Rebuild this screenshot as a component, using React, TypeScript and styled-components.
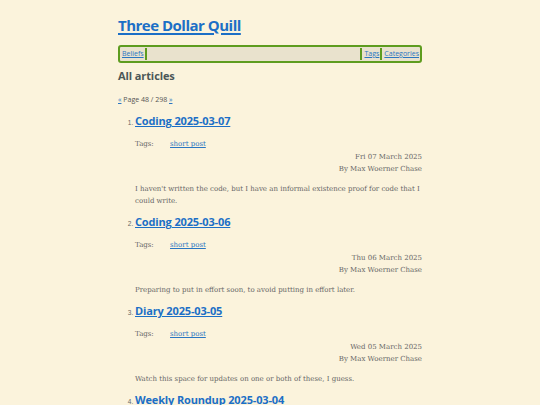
import React from "react";
import styled, { createGlobalStyle } from "styled-components";

const Global = createGlobalStyle`
  html, body { margin: 0; padding: 0; background: #fbf3dc; }
  body { font-family: "DejaVu Serif", serif; color: #555; }
`;

const Page = styled.div`
  width: 304px;
  margin: 0 auto;
  padding-top: 13px;
`;

const SiteTitle = styled.h1`
  margin: 0 0 8px 0;
  font-family: "Open Sans", "Noto Sans", sans-serif;
  font-size: 15px;
  letter-spacing: -0.5px;
  font-weight: 700;
  line-height: 24px;
  a { color: #1c6fc6; text-decoration: underline; text-decoration-thickness: 2px; text-underline-offset: 2px; }
`;

const Nav = styled.nav`
  display: flex;
  align-items: stretch;
  height: 12px;
  border: 2px solid #5e9c1f;
  border-radius: 3px;
  background: #e9e2cd;
  padding: 1px 0;
  font-family: "Open Sans", "Noto Sans", sans-serif;
  font-size: 7px;
  line-height: 12px;
`;

const NavItem = styled.a<{ $left?: boolean }>`
  color: #2a76c2;
  text-decoration: underline;
  padding: 0 1px 0 2px;
  ${(p) => (p.$left ? "border-right: 2px solid #5e9c1f;" : "border-left: 2px solid #5e9c1f;")}
`;

const Spacer = styled.div`
  flex: 1;
`;

const Heading = styled.h2`
  margin: 5px 0 0 0;
  font-family: "Open Sans", "Noto Sans", sans-serif;
  font-size: 11px;
  letter-spacing: -0.1px;
  font-weight: 700;
  color: #4b5757;
  line-height: 16px;
`;

const Pager = styled.p`
  margin: 10px 0 0 0;
  font-family: "Open Sans", "Noto Sans", sans-serif;
  font-size: 7px;
  line-height: 12px;
  color: #555;
  a { color: #2a76c2; }
`;

const List = styled.ol`
  margin: 6px 0 0 0;
  padding-left: 17px;
  font-family: "Liberation Sans", sans-serif;
  font-size: 6.5px;
  color: #666;
`;

const Item = styled.li`
  margin-bottom: 6px;
`;

const ItemTitle = styled.h3`
  margin: 0;
  display: inline;
  font-family: "Open Sans", "Noto Sans", sans-serif;
  font-size: 11px;
  letter-spacing: -0.15px;
  font-weight: 700;
  line-height: 18px;
  a { color: #1c6fc6; text-decoration: underline; text-underline-offset: 1px; }
`;

const Meta = styled.div`
  margin-top: 8px;
  display: flex;
  font-family: "DejaVu Serif", serif;
  font-size: 7px;
  line-height: 12px;
  color: #666;
`;

const TagLabel = styled.span`
  width: 35px;
`;

const TagLink = styled.a`
  color: #2a76c2;
  text-decoration: underline;
`;

const Byline = styled.div<{ $first?: boolean }>`
  margin-top: ${(p) => (p.$first ? "1px" : "0")};
  text-align: right;
  font-family: "DejaVu Serif", serif;
  font-size: 7px;
  line-height: 12px;
  color: #666;
`;

const Summary = styled.p`
  margin: 8px 0 0 0;
  font-family: "DejaVu Serif", serif;
  font-size: 7px;
  line-height: 12px;
  color: #666;
`;

const posts = [
  { title: "Coding 2025-03-07", date: "Fri 07 March 2025", text: "I haven't written the code, but I have an informal existence proof for code that I could write." },
  { title: "Coding 2025-03-06", date: "Thu 06 March 2025", text: "Preparing to put in effort soon, to avoid putting in effort later." },
  { title: "Diary 2025-03-05", date: "Wed 05 March 2025", text: "Watch this space for updates on one or both of these, I guess." },
  { title: "Weekly Roundup 2025-03-04", date: "Tue 04 March 2025", text: "Some stuff." },
];

export default function App() {
  return (
    <>
      <Global />
      <Page>
        <SiteTitle><a href="#">Three Dollar Quill</a></SiteTitle>
        <Nav>
          <NavItem href="#" $left>Beliefs</NavItem>
          <Spacer />
          <NavItem href="#">Tags</NavItem>
          <NavItem href="#">Categories</NavItem>
        </Nav>
        <Heading>All articles</Heading>
        <Pager><a href="#">«</a> Page 48 / 298 <a href="#">»</a></Pager>
        <List>
          {posts.map((p) => (
            <Item key={p.title}>
              <ItemTitle><a href="#">{p.title}</a></ItemTitle>
              <Meta>
                <TagLabel>Tags:</TagLabel>
                <TagLink href="#">short post</TagLink>
              </Meta>
              <Byline $first>{p.date}</Byline>
              <Byline>By Max Woerner Chase</Byline>
              <Summary>{p.text}</Summary>
            </Item>
          ))}
        </List>
      </Page>
    </>
  );
}
